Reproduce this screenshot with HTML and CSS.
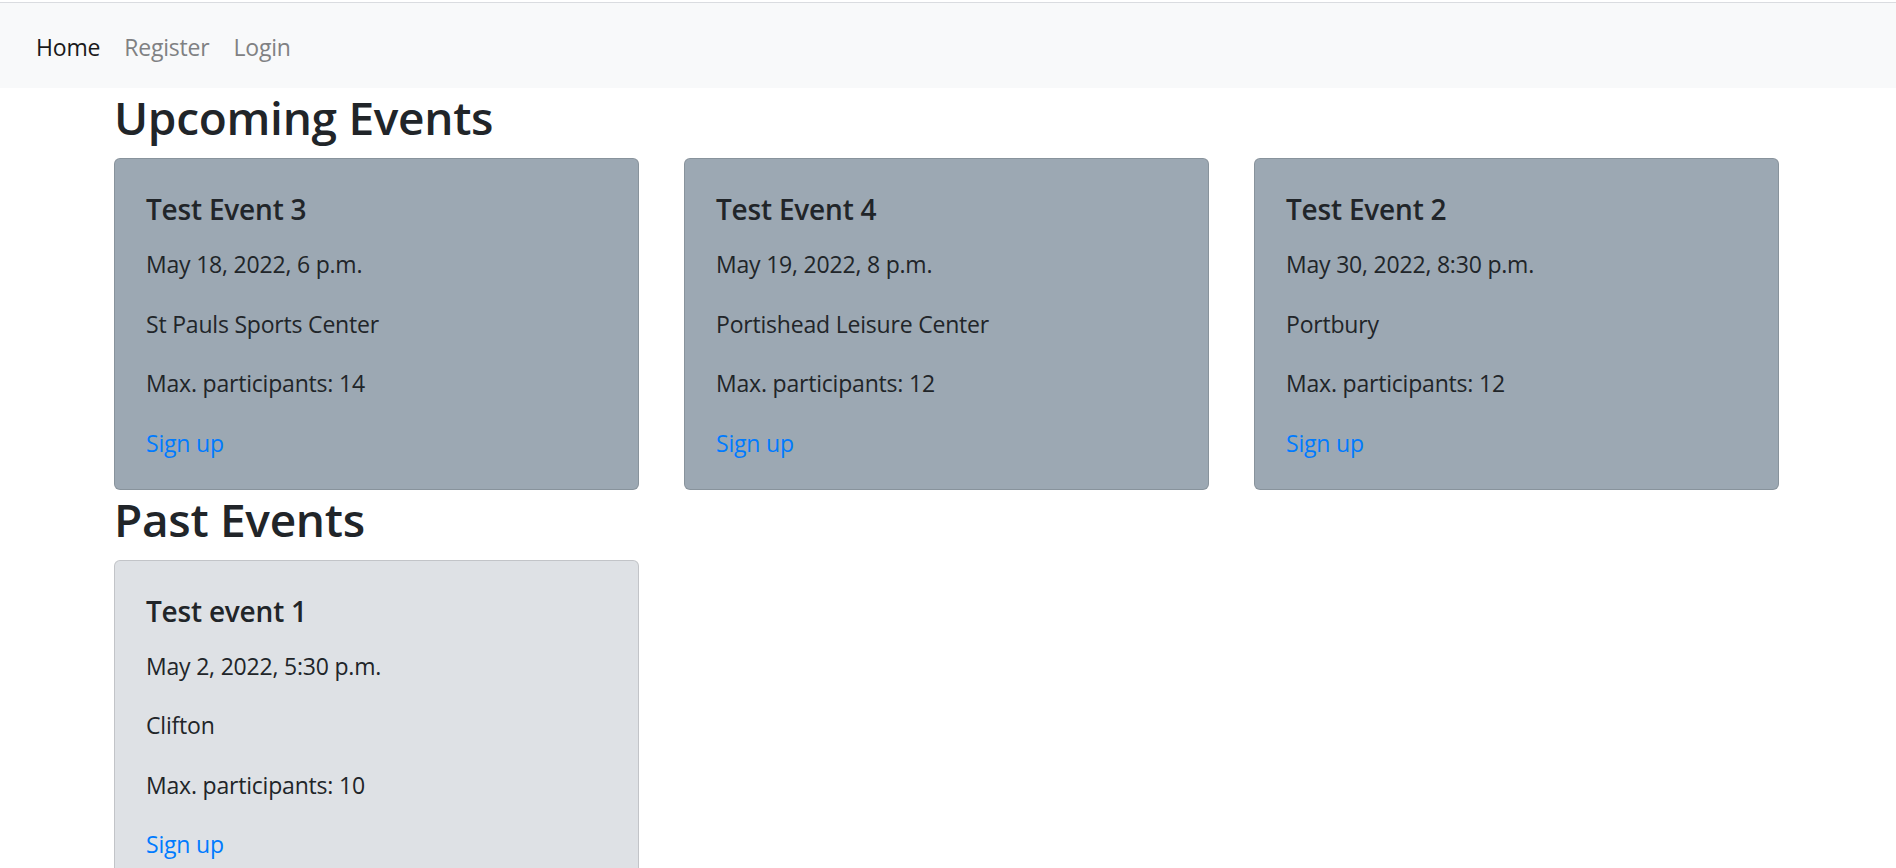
FILE: index.html
```html
<!DOCTYPE html>
<html lang="en">
<head>
<meta charset="utf-8">
<title>Events</title>
<link rel="stylesheet" href="styles.css">
</head>
<body>
<nav class="navbar">
  <a class="nav-link active" href="#">Home</a>
  <a class="nav-link" href="#">Register</a>
  <a class="nav-link" href="#">Login</a>
</nav>
<main class="container">
  <h2 class="section-title">Upcoming Events</h2>
  <div class="card-grid">
    <div class="card card-upcoming">
      <h5 class="card-title">Test Event 3</h5>
      <p class="card-text">May 18, 2022, 6 p.m.</p>
      <p class="card-text">St Pauls Sports Center</p>
      <p class="card-text">Max. participants: 14</p>
      <a class="card-link" href="#">Sign up</a>
    </div>
    <div class="card card-upcoming">
      <h5 class="card-title">Test Event 4</h5>
      <p class="card-text">May 19, 2022, 8 p.m.</p>
      <p class="card-text">Portishead Leisure Center</p>
      <p class="card-text">Max. participants: 12</p>
      <a class="card-link" href="#">Sign up</a>
    </div>
    <div class="card card-upcoming">
      <h5 class="card-title">Test Event 2</h5>
      <p class="card-text">May 30, 2022, 8:30 p.m.</p>
      <p class="card-text">Portbury</p>
      <p class="card-text">Max. participants: 12</p>
      <a class="card-link" href="#">Sign up</a>
    </div>
  </div>
  <h2 class="section-title">Past Events</h2>
  <div class="card-grid">
    <div class="card card-past">
      <h5 class="card-title">Test event 1</h5>
      <p class="card-text">May 2, 2022, 5:30 p.m.</p>
      <p class="card-text">Clifton</p>
      <p class="card-text">Max. participants: 10</p>
      <a class="card-link" href="#">Sign up</a>
    </div>
  </div>
</main>
</body>
</html>
```
FILE: styles.css
```css
html {
  overflow: hidden;
}
body {
  margin: 2px 0 0 0;
  font-family: "Open Sans", "Noto Sans", sans-serif;
  font-size: 23px;
  line-height: 36px;
  letter-spacing: -0.2px;
  color: #212529;
  background: #ffffff;
}
.navbar {
  display: flex;
  align-items: center;
  padding: 12px 24px 13px 24px;
  background: #f8f9fa;
  border-top: 1px solid #dadce0;
}
.nav-link {
  display: block;
  padding: 14px 12px 10px 12px;
  color: #808183;
  text-decoration: none;
  font-size: 23px;
  line-height: 36px;
}
.nav-link.active {
  color: #1a1a1a;
}
.container {
  padding: 0 117px 0 114px;
}
.section-title {
  margin: 0 0 12px 0;
  padding-top: 1px;
  font-size: 46px;
  line-height: 57px;
  letter-spacing: -0.3px;
  font-weight: 600;
}
.card-grid {
  display: grid;
  grid-template-columns: repeat(3, 1fr);
  column-gap: 45px;
}
.card {
  border: 1px solid rgba(0, 0, 0, 0.125);
  border-radius: 6px;
  padding: 32px 30px 28.4px 31px;
}
.card-upcoming {
  background: #9ca8b3;
}
.card-past {
  background: #dee1e5;
}
.card-title {
  margin: 0 0 19px 0;
  font-size: 28px;
  line-height: 36px;
  letter-spacing: -0.2px;
  font-weight: 600;
}
.card-text {
  margin: 0 0 23.5px 0;
}
.card-link {
  display: block;
  color: #007bff;
  text-decoration: none;
}
```
